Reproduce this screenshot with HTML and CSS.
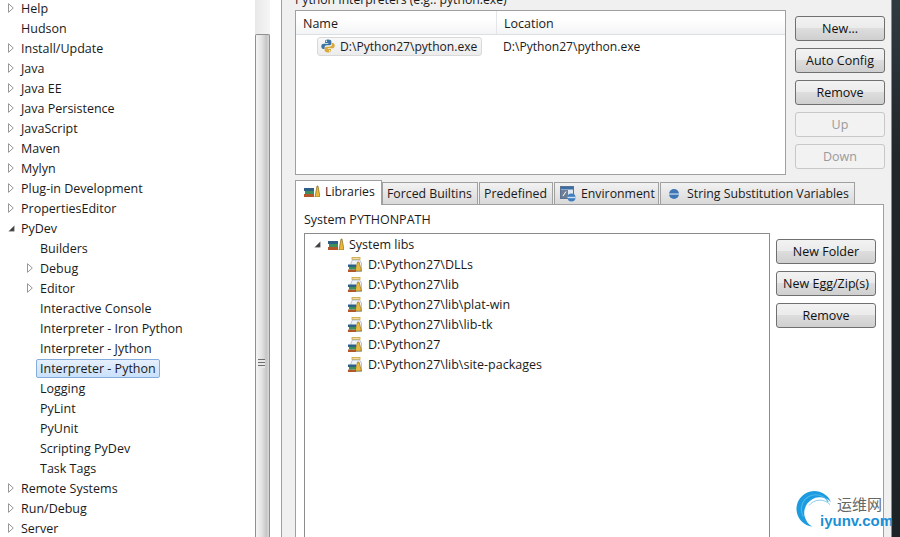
FILE: index.html
```html
<!DOCTYPE html>
<html lang="en">
<head>
<meta charset="utf-8">
<title>Preferences</title>
<link rel="stylesheet" href="styles.css">
</head>
<body>
<svg class="defs" width="0" height="0" aria-hidden="true">
  <defs>
    <symbol id="closed" viewBox="0 0 6 10"><path d="M0.5 0.7 L5.3 5 L0.5 9.3 Z" fill="#fff" stroke="#979797"/></symbol>
    <symbol id="open" viewBox="0 0 9 9"><path d="M8 1 V8 H1 Z" fill="#3c3c3c" stroke="#8a8a8a" stroke-width=".6"/></symbol>
    <symbol id="books" viewBox="0 0 16 12">
      <rect x="0" y="9" width="10" height="3" fill="#b5562a"/>
      <rect x="1" y="6" width="9" height="3" fill="#3f8f5c"/>
      <rect x="0" y="3" width="10" height="3" fill="#2f5f86"/>
      <path d="M11 12 L13 1 L14 1 L16 12 Z" fill="#e8b93c" stroke="#8a6a18" stroke-width=".7"/>
    </symbol>
    <symbol id="jar" viewBox="0 0 14 15">
      <rect x="4" y="0.5" width="8" height="2" fill="#f3dc9c" stroke="#c9a23e" stroke-width=".8"/>
      <path d="M4.5 3 H11.5 L13.5 6 V14.5 H3 V6 Z" fill="#eef2f7" stroke="#a9b4c2" stroke-width=".8"/>
      <path d="M7 14 L9.5 5 L11 5 L13.5 14 Z" fill="#e8b93c" stroke="#8a6a18" stroke-width=".6"/>
      <rect x="0" y="12.5" width="8" height="2.5" fill="#b5562a"/>
      <rect x="1" y="10" width="7" height="2.5" fill="#3f8f5c"/>
      <rect x="0" y="7.5" width="8" height="2.5" fill="#2f5f86"/>
    </symbol>
    <symbol id="python" viewBox="0 0 14 14">
      <path d="M7 0.5 C4.4 0.5 4 1.5 4 2.7 V4 H7.3 V4.7 H2.6 C1.1 4.7 0.3 5.8 0.3 7.3 C0.3 8.9 1 10 2.4 10 H3.6 V8.4 C3.6 7.1 4.6 6.2 5.9 6.2 H8.7 C9.7 6.2 10.4 5.4 10.4 4.5 V2.7 C10.4 1.4 9.3 0.5 7 0.5 Z" fill="#3b75a6"/>
      <circle cx="5.4" cy="2.2" r=".7" fill="#fff"/>
      <path d="M7 13.5 C9.6 13.5 10 12.5 10 11.3 V10 H6.7 V9.3 H11.4 C12.9 9.3 13.7 8.2 13.7 6.7 C13.7 5.1 13 4 11.6 4 H10.9 V5.6 C10.9 6.9 9.9 7.8 8.6 7.8 H5.3 C4.3 7.8 3.6 8.6 3.6 9.5 V11.3 C3.6 12.6 4.7 13.5 7 13.5 Z" fill="#d9a93c"/>
      <circle cx="8.6" cy="11.8" r=".7" fill="#fff"/>
    </symbol>
    <symbol id="env" viewBox="0 0 16 16">
      <rect x="0.5" y="0.5" width="13" height="12" fill="#dfe8f2" stroke="#5a7290"/>
      <rect x="1" y="1" width="12" height="2.5" fill="#3a6ea5"/>
      <rect x="1" y="4" width="7" height="8" fill="#6d7f94"/>
      <path d="M3 10 L6 5.5" stroke="#fff" stroke-width="1"/>
      <circle cx="11.5" cy="11.5" r="4" fill="#3f7fbf"/>
      <rect x="7.5" y="10.8" width="8" height="1.4" fill="#cfe0f2"/>
    </symbol>
    <symbol id="ball" viewBox="0 0 12 12">
      <circle cx="6" cy="6" r="5" fill="#3f76b5"/>
      <rect x="1" y="5.4" width="10" height="1.3" fill="#c4d6ea"/>
    </symbol>
  </defs>
</svg>

<nav class="tree">
  <div class="node"><svg class="tw"><use href="#closed"/></svg><span>Help</span></div>
  <div class="node"><i class="tw"></i><span>Hudson</span></div>
  <div class="node"><svg class="tw"><use href="#closed"/></svg><span>Install/Update</span></div>
  <div class="node"><svg class="tw"><use href="#closed"/></svg><span>Java</span></div>
  <div class="node"><svg class="tw"><use href="#closed"/></svg><span>Java EE</span></div>
  <div class="node"><svg class="tw"><use href="#closed"/></svg><span>Java Persistence</span></div>
  <div class="node"><svg class="tw"><use href="#closed"/></svg><span>JavaScript</span></div>
  <div class="node"><svg class="tw"><use href="#closed"/></svg><span>Maven</span></div>
  <div class="node"><svg class="tw"><use href="#closed"/></svg><span>Mylyn</span></div>
  <div class="node"><svg class="tw"><use href="#closed"/></svg><span>Plug-in Development</span></div>
  <div class="node"><svg class="tw"><use href="#closed"/></svg><span>PropertiesEditor</span></div>
  <div class="node"><svg class="tw tw-open"><use href="#open"/></svg><span>PyDev</span></div>
  <div class="node sub"><i class="tw"></i><span>Builders</span></div>
  <div class="node sub"><svg class="tw"><use href="#closed"/></svg><span>Debug</span></div>
  <div class="node sub"><svg class="tw"><use href="#closed"/></svg><span>Editor</span></div>
  <div class="node sub"><i class="tw"></i><span>Interactive Console</span></div>
  <div class="node sub"><i class="tw"></i><span>Interpreter - Iron Python</span></div>
  <div class="node sub"><i class="tw"></i><span>Interpreter - Jython</span></div>
  <div class="node sub"><i class="tw"></i><span class="selected">Interpreter - Python</span></div>
  <div class="node sub"><i class="tw"></i><span>Logging</span></div>
  <div class="node sub"><i class="tw"></i><span>PyLint</span></div>
  <div class="node sub"><i class="tw"></i><span>PyUnit</span></div>
  <div class="node sub"><i class="tw"></i><span>Scripting PyDev</span></div>
  <div class="node sub"><i class="tw"></i><span>Task Tags</span></div>
  <div class="node"><svg class="tw"><use href="#closed"/></svg><span>Remote Systems</span></div>
  <div class="node"><svg class="tw"><use href="#closed"/></svg><span>Run/Debug</span></div>
  <div class="node"><svg class="tw"><use href="#closed"/></svg><span>Server</span></div>
</nav>

<div class="scrollbar">
  <div class="thumb"><div class="grip"></div></div>
</div>
<div class="sash"></div>

<main class="main">
  <div class="content">
    <div class="title">Python Interpreters (e.g.: python.exe)</div>
    <section class="top">
      <div class="table">
        <div class="thead">
          <div class="th th-name">Name</div>
          <div class="th">Location</div>
        </div>
        <div class="trow">
          <div class="td-name">
            <div class="cell-sel"><svg class="py"><use href="#python"/></svg><span>D:\Python27\python.exe</span></div>
          </div>
          <div class="td-loc">D:\Python27\python.exe</div>
        </div>
      </div>
      <div class="btns btns-top">
        <button class="btn">New...</button>
        <button class="btn">Auto Config</button>
        <button class="btn">Remove</button>
        <button class="btn" disabled>Up</button>
        <button class="btn" disabled>Down</button>
      </div>
    </section>

    <section class="folder">
      <div class="tabs">
        <div class="tab active"><svg class="ic-books"><use href="#books"/></svg>Libraries</div>
        <div class="tab t-forced">Forced Builtins</div>
        <div class="tab t-pre">Predefined</div>
        <div class="tab t-env"><svg class="ic-env"><use href="#env"/></svg>Environment</div>
        <div class="tab t-str"><svg class="ic-ball"><use href="#ball"/></svg>String Substitution Variables</div>
      </div>
      <div class="panel">
        <div class="panel-label">System PYTHONPATH</div>
        <div class="panel-body">
          <div class="libs">
            <div class="lib-root"><svg class="tw-open2"><use href="#open"/></svg><svg class="ic-books2"><use href="#books"/></svg><span>System libs</span></div>
            <div class="lib"><svg class="ic-jar"><use href="#jar"/></svg><span>D:\Python27\DLLs</span></div>
            <div class="lib"><svg class="ic-jar"><use href="#jar"/></svg><span>D:\Python27\lib</span></div>
            <div class="lib"><svg class="ic-jar"><use href="#jar"/></svg><span>D:\Python27\lib\plat-win</span></div>
            <div class="lib"><svg class="ic-jar"><use href="#jar"/></svg><span>D:\Python27\lib\lib-tk</span></div>
            <div class="lib"><svg class="ic-jar"><use href="#jar"/></svg><span>D:\Python27</span></div>
            <div class="lib"><svg class="ic-jar"><use href="#jar"/></svg><span>D:\Python27\lib\site-packages</span></div>
          </div>
          <div class="btns btns-lib">
            <button class="btn">New Folder</button>
            <button class="btn">New Egg/Zip(s)</button>
            <button class="btn">Remove</button>
          </div>
        </div>
      </div>
    </section>
  </div>
  <div class="strip"></div>
</main>

<div class="watermark">
  <svg class="wm-arcs" viewBox="0 0 50 50">
    <path d="M18 41 A19.5 19.5 0 1 1 38 14 A17 17 0 1 0 18 41 Z" fill="#1b9be0"/>
    <path d="M8 30 A15 15 0 0 1 35 14" fill="none" stroke="#4fb4e8" stroke-width="1.3"/>
    <path d="M14 18 A15 15 0 0 1 37 17" fill="none" stroke="#7cc8ee" stroke-width="1"/>
  </svg>
  <div class="wm-cn">运维网</div>
  <div class="wm-en">iyunv.com</div>
</div>
</body>
</html>
```

FILE: styles.css
```css
* { box-sizing: border-box; }
html, body { margin: 0; height: 537px; overflow: hidden; }
body {
  display: flex;
  position: relative;
  width: 900px;
  background: #fff;
  font-family: "Open Sans", "Noto Sans", sans-serif;
  font-size: 12.5px;
  color: #1a1a1a;
}
.defs { position: absolute; }

.tree { width: 255px; flex: none; margin-top: -2px; }
.node { display: flex; align-items: center; height: 20px; padding-left: 8px; white-space: nowrap; }
.node.sub { padding-left: 27px; }
.tw { display: block; width: 6px; height: 10px; margin-right: 7px; flex: none; }
.tw-open { width: 7px; height: 7px; margin-right: 6px; }
.selected {
  margin: 0 -4px;
  padding: 0 3px;
  height: 19px;
  line-height: 17px;
  border: 1px solid #84acdd;
  border-radius: 2px;
  background: linear-gradient(#e6f0fd, #c9e0fb);
}

.scrollbar {
  width: 15px;
  flex: none;
  padding-top: 34px;
  background: linear-gradient(90deg, #e8e8e8, #f6f6f6);
}
.thumb {
  height: 100%;
  border: 1px solid #8f8f8f;
  border-bottom: 0;
  border-radius: 2px 2px 0 0;
  background: linear-gradient(90deg, #f4f4f4, #e2e2e2 45%, #c6c6c6 80%, #d8d8d8);
  padding-top: 324px;
  padding-left: 2px;
}
.grip {
  width: 7px;
  height: 9px;
  background: repeating-linear-gradient(#6e6e6e 0 1px, #e8e8e8 1px 3px);
}
.sash { width: 12px; flex: none; background: #fff; border-right: 1px solid #a0a0a0; }

.main { flex: 1; display: flex; background: #f0f0f0; padding-left: 13px; }
.content { width: 589px; flex: none; margin-top: -9px; }
.strip {
  width: 9px;
  margin-left: 7px;
  flex: none;
  border-left: 1px solid #8a8a8a;
  background: linear-gradient(#2f3a40, #20262a 30%, #1d2226);
}
.title { height: 19px; line-height: 17px; font-size: 12.2px; white-space: nowrap; }

.top { display: flex; height: 165px; width: 590px; }
.table { width: 491px; flex: none; background: #fff; border: 1px solid #a0a0a0; }
.thead { display: flex; height: 24px; background: linear-gradient(#fff 35%, #f3f4f5); border-bottom: 1px solid #dcdfe3; }
.th { padding: 1px 7px 0; line-height: 23px; }
.th-name { width: 201px; border-right: 1px solid #e3e5e8; }
.trow { display: flex; height: 22px; align-items: center; font-size: 12.1px; }
.td-name { width: 201px; padding-left: 21px; flex: none; }
.cell-sel {
  display: flex;
  align-items: center;
  height: 19px;
  width: 165px;
  padding-left: 3px;
  border: 1px solid #d9d9d9;
  border-radius: 3px;
  background: linear-gradient(#f8f8f8, #ececec);
  white-space: nowrap;
}
.py { width: 14px; height: 14px; margin-right: 5px; flex: none; }
.td-loc { padding-left: 6px; white-space: nowrap; }

.btns { display: flex; flex-direction: column; flex: none; gap: 7px; }
.btns-top { width: 90px; margin-left: 9px; padding-top: 6px; }
.btn {
  height: 25px;
  padding: 0;
  font: inherit;
  color: #111;
  border: 1px solid #707070;
  border-radius: 3px;
  background: linear-gradient(#f2f2f2 0, #ebebeb 48%, #dddddd 50%, #cfcfcf 100%);
  white-space: nowrap;
}
.btn:disabled { color: #9a9a9a; border-color: #c8c8c8; background: #f2f2f2; }

.folder { margin-top: 5px; }
.tabs { display: flex; height: 24px; align-items: flex-end; font-size: 12.3px; }
.tab {
  display: flex;
  align-items: center;
  height: 22px;
  margin-right: 1px;
  border: 1px solid #a0a0a0;
  border-bottom: 0;
  background: linear-gradient(#f2f2f2, #d9d9d9);
  white-space: nowrap;
}
.tab.active {
  width: 87px;
  height: 25px;
  margin-bottom: -1px;
  padding-left: 8px;
  padding-bottom: 4px;
  margin-right: 0;
  background: #fff;
  position: relative;
  z-index: 1;
}
.t-forced { width: 96px; padding-left: 4px; }
.t-pre { width: 74px; padding-left: 4px; }
.t-env { width: 105px; padding-left: 5px; }
.t-str { width: 195px; padding-left: 7px; margin-right: 0; }
.ic-books { width: 16px; height: 12px; margin-right: 5px; flex: none; }
.ic-env { width: 16px; height: 16px; margin-right: 5px; flex: none; }
.ic-ball { width: 12px; height: 12px; margin-right: 7px; flex: none; }

.panel { height: 340px; background: #fff; border: 1px solid #a0a0a0; padding: 0 8px; }
.panel-label { height: 28px; line-height: 29px; }
.panel-body { display: flex; }
.libs { width: 466px; height: 320px; flex: none; border: 1px solid #8c8c8c; }
.lib-root, .lib { display: flex; align-items: center; height: 20px; white-space: nowrap; }
.lib-root { padding-left: 9px; }
.tw-open2 { width: 7px; height: 7px; margin-right: 7px; flex: none; }
.ic-books2 { width: 16px; height: 12px; margin-right: 5px; flex: none; }
.lib { padding-left: 43px; }
.ic-jar { width: 14px; height: 15px; margin-right: 6px; flex: none; }
.btns-lib { width: 100px; margin-left: 6px; padding-top: 6px; }

.watermark { position: absolute; left: 795px; top: 488px; width: 105px; height: 49px; }
.wm-arcs { position: absolute; left: 1px; top: 1px; width: 46px; height: 46px; }
.wm-cn {
  position: absolute; left: 42px; top: 8px;
  font: 15px "Noto Sans CJK SC", sans-serif;
  color: #666;
  line-height: 16px;
  white-space: nowrap;
}
.wm-en {
  position: absolute; left: 25px; top: 24px;
  font: bold 15px "Liberation Sans", sans-serif;
  color: #1b8fd6;
  line-height: 17px;
  white-space: nowrap;
}
```
